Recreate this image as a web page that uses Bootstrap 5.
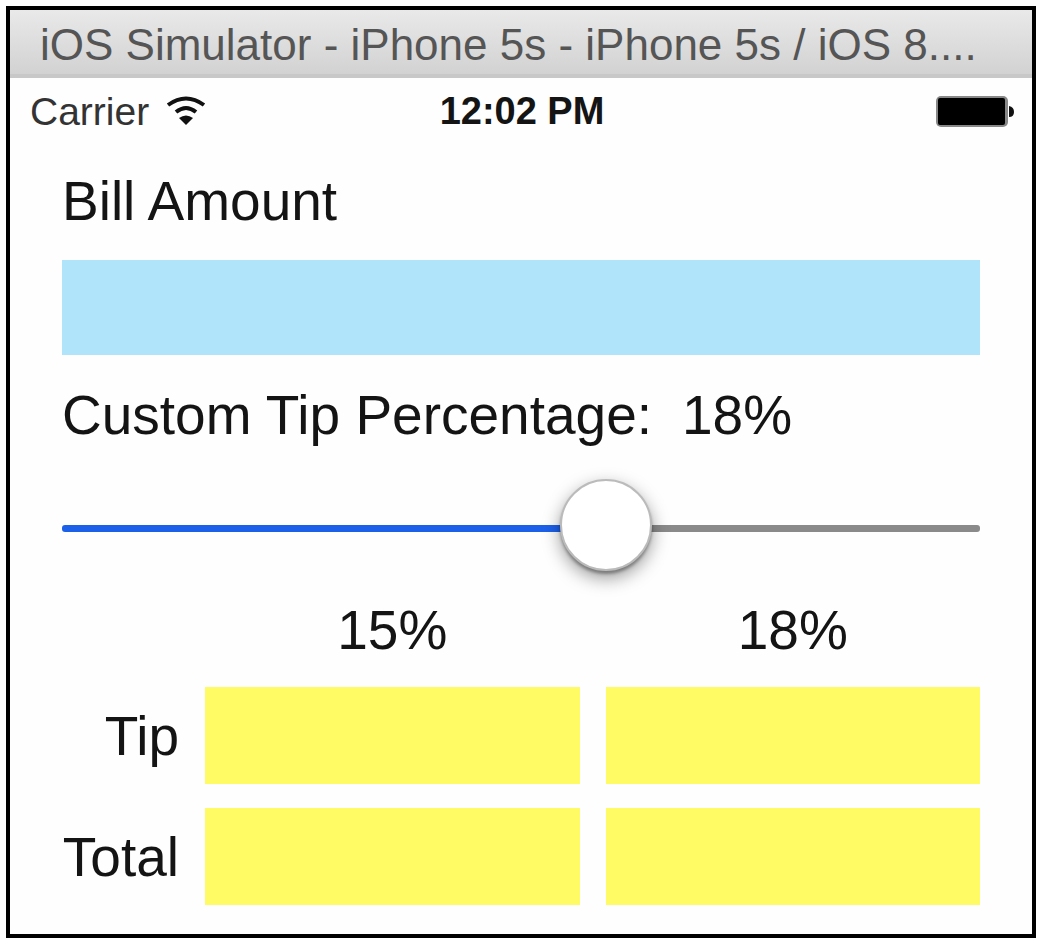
<!DOCTYPE html>
<html lang="en">
<head>
<meta charset="utf-8">
<meta name="viewport" content="width=device-width, initial-scale=1">
<title>Tip Calculator</title>
<link href="https://cdn.jsdelivr.net/npm/bootstrap@5.3.0/dist/css/bootstrap.min.css" rel="stylesheet">
<style>
  body { font-family: "Liberation Sans", Arial, sans-serif; color: #141414; background: #fff; padding: 6px; }
  .simulator { border: 4px solid #000; background: #fefefe; }
  .title-bar { height: 68px; padding: 0 30px; font-size: 44px; line-height: 70px; color: #555;
    background: linear-gradient(#e9e9e9, #d2d2d2); border-bottom: 4px solid #c8c8c8; }
  .status-bar { height: 67px; padding: 0 18px 0 20px; line-height: 67px; }
  .carrier { font-size: 39px; color: #333; }
  .clock { font-size: 38px; }
  .calculator { padding: 26px 52px 28px; font-size: 55px; line-height: 60px; }
  .calculator input { font-size: 55px; }
  .bill-field { height: 95px; margin: 29px 0 30px; background: #b0e4fa; }
  .result-field { height: 97px; background: #fffb65; }
  .bill-field, .result-field { border: 0; border-radius: 0; padding: 0 16px; width: 100%; min-width: 0; display: block; }
  .percent-value { margin-left: 30px; }
  .tip-slider { appearance: none; -webkit-appearance: none; display: block; width: 100%; height: 90px;
    margin: 35px 0 30px; background: transparent; }
  .tip-slider::-webkit-slider-runnable-track { height: 7px; border-radius: 3px; margin-top: 6px;
    background: linear-gradient(to right, #1c60ea var(--fill), #8a8a8a var(--fill)); }
  .tip-slider::-webkit-slider-thumb { -webkit-appearance: none; width: 92px; height: 92px; margin-top: -46px;
    border: 2px solid #bbb; border-radius: 50%; background: #fff;
    box-shadow: 0 3px 3px rgba(0,0,0,.3), 0 7px 18px rgba(0,0,0,.4); }
  .results { display: grid; grid-template-columns: 117px 1fr 1fr; column-gap: 26px; row-gap: 24px; align-items: center; }
  .column-head { padding-bottom: 3px; }
</style>
</head>
<body class="min-vh-100 d-flex flex-column">
<main class="simulator flex-fill">
  <header class="title-bar text-truncate">iOS Simulator - iPhone 5s - iPhone 5s / iOS 8....</header>
  <div class="status-bar row g-0 align-items-center">
    <div class="col d-flex align-items-center">
      <span class="carrier">Carrier</span>
      <svg class="ms-3" width="42" height="34" viewBox="0 0 42 34" fill="none" stroke="#111" stroke-width="4" aria-label="Wi-Fi">
        <path d="M3 10Q21-3 39 10M11 17Q21 9 31 17"/>
        <path d="M21 30L14 23Q21 18 28 23Z" fill="#111" stroke="none"/>
      </svg>
    </div>
    <div class="clock col-auto fw-bold">12:02 PM</div>
    <div class="col d-flex justify-content-end">
      <svg width="80" height="34" viewBox="0 0 80 34" aria-label="Battery full">
        <rect x="2" y="1" width="72" height="31" rx="5" fill="#888"/>
        <rect x="4" y="3" width="67" height="27" rx="2" fill="#000"/>
        <path d="M75 11Q80 12 80 17T75 22Z" fill="#111"/>
      </svg>
    </div>
  </div>
  <form class="calculator">
    <label class="d-block" for="bill">Bill Amount</label>
    <input class="bill-field" id="bill" type="text" inputmode="decimal">
    <div class="d-flex">
      <label for="tip">Custom Tip Percentage:</label>
      <output class="percent-value" for="tip">18%</output>
    </div>
    <input class="tip-slider" id="tip" type="range" min="0" max="30" step="0.1" value="18.1" style="--fill:60%">
    <div class="results">
      <span></span>
      <span class="column-head text-center">15%</span>
      <span class="column-head text-center">18%</span>
      <label class="text-end" for="tip15">Tip</label>
      <input class="result-field" id="tip15" type="text" readonly>
      <input class="result-field" type="text" readonly aria-label="Tip at 18%">
      <label class="text-end" for="total15">Total</label>
      <input class="result-field" id="total15" type="text" readonly>
      <input class="result-field" type="text" readonly aria-label="Total at 18%">
    </div>
  </form>
</main>
<script src="https://cdn.jsdelivr.net/npm/bootstrap@5.3.0/dist/js/bootstrap.bundle.min.js"></script>
</body>
</html>
